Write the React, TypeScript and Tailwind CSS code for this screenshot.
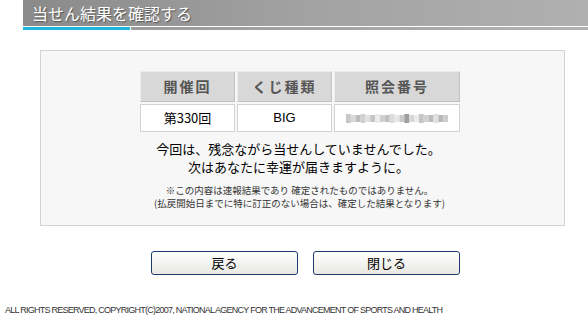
import React from 'react'

const jp = { fontFamily: '"Noto Sans CJK JP", "Liberation Sans", sans-serif' }

// pixelated blurred reference number
const blurCells = [
  '#c8c8c8', '#d8d8d8', '#bdbdbd', '#d0d0d0', '#e0e0e0', '#c4c4c4', '#ececec',
  '#cfcfcf', '#c0c0c0', '#dcdcdc', '#e6e6e6', '#cacaca', '#9e9e9e', '#d6d6d6',
  '#ebebeb', '#c6c6c6', '#d2d2d2', '#bcbcbc', '#e0e0e0', '#b8b8b8', '#cccccc',
]

function BlurredNumber() {
  return (
    <svg width="102" height="9" viewBox="0 0 102 9">
      {blurCells.map((c, i) => (
        <rect key={i} x={i * 4.86} y={i % 3 === 0 ? 0 : 1} width="4.86" height={i % 3 === 0 ? 9 : 7} fill={c} />
      ))}
    </svg>
  )
}

export default function App() {
  return (
    <div className="w-[588px] h-[323px] bg-white overflow-hidden" style={jp}>
      {/* Header */}
      <div className="ml-[23px]">
        <div className="h-[26px] bg-gradient-to-r from-[#8a8a8a] via-[#a2a2a2] to-[#b0b0b0] flex items-center pl-[9px]">
          <span className="text-white text-[16px] leading-none [text-shadow:1px_1px_1px_#555]">当せん結果を確認する</span>
        </div>
        <div className="h-px bg-white" />
        <div className="flex h-[3px]">
          <div className="w-[107px] bg-[#1bb8d9]" />
          <div className="w-px bg-white" />
          <div className="flex-1 bg-gradient-to-r from-[#9a9a9a] to-[#b2b2b2]" />
        </div>
      </div>

      {/* Result box */}
      <div className="ml-[40px] w-[525px] mt-[20px] h-[176px] border border-[#d3d3d3] bg-[#f7f7f7] pt-[20px]">
        <div className="grid grid-cols-[95px_95px_126px] grid-rows-[31px_28px] gap-[2px] w-[320px] ml-[99px]">
          {['開催回', 'くじ種類', '照会番号'].map((h) => (
            <div
              key={h}
              className="bg-[#d8d8d8] border border-t-[#ececec] border-l-[#ececec] border-r-[#c2c2c2] border-b-[#c2c2c2] flex items-center justify-center text-[14px] font-bold text-[#555] tracking-[2px]"
            >
              {h}
            </div>
          ))}
          <div className="bg-white border border-[#d2d2d2] flex items-center justify-center text-[13px] text-black">第330回</div>
          <div className="bg-white border border-[#d2d2d2] flex items-center justify-center text-[13px] text-black" style={{ fontFamily: '"Liberation Sans", sans-serif' }}>BIG</div>
          <div className="bg-white border border-[#d2d2d2] flex items-center justify-center">
            <BlurredNumber />
          </div>
        </div>

        <div className="mt-[8px] text-center text-[13px] leading-[18px] text-black -ml-[8px]">
          <p>今回は、残念ながら当せんしていませんでした。</p>
          <p>次はあなたに幸運が届きますように。</p>
        </div>

        <div className="mt-[8px] text-center text-[9.5px] leading-[13px] text-[#333] -ml-[6px]">
          <p>※この内容は速報結果であり 確定されたものではありません。</p>
          <p>(払戻開始日までに特に訂正のない場合は、確定した結果となります)</p>
        </div>
      </div>

      {/* Buttons */}
      <div className="flex gap-[15px] ml-[151px] mt-[25px]">
        {['戻る', '閉じる'].map((b) => (
          <button
            key={b}
            className="w-[147px] h-[24px] rounded-[3px] border border-[#1c3a70] bg-gradient-to-b from-[#ffffff] to-[#e9e8e2] text-[13px] text-black flex items-center justify-center"
          >
            {b}
          </button>
        ))}
      </div>

      {/* Footer */}
      <div
        className="ml-[5px] mt-[31px] text-[9px] leading-none text-[#333] tracking-[-0.75px] whitespace-nowrap"
        style={{ fontFamily: '"Liberation Sans", sans-serif' }}
      >
        ALL RIGHTS RESERVED, COPYRIGHT(C)2007, NATIONAL AGENCY FOR THE ADVANCEMENT OF SPORTS AND HEALTH
      </div>
    </div>
  )
}
